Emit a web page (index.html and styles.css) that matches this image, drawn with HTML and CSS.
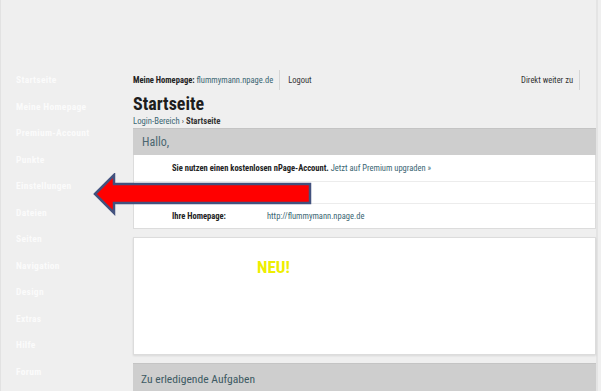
FILE: index.html
```html
<!DOCTYPE html>
<html lang="de">

<head>
    <meta charset="UTF-8">
    <meta name="viewport" content="width=device-width, initial-scale=1.0">
    <title>Startseite - Login-Bereich</title>

    <link rel="stylesheet" href="styles.css">
</head>

<body>

    <div class="page">
        <ul class="sidebar">
            <li>Startseite</li>
            <li>Meine Homepage</li>
            <li>Premium-Account</li>
            <li>Punkte</li>
            <li>Einstellungen</li>
            <li>Dateien</li>
            <li>Seiten</li>
            <li>Navigation</li>
            <li>Design</li>
            <li>Extras</li>
            <li>Hilfe</li>
            <li>Forum</li>
        </ul>

        <div class="main">
            <div class="topbar">
                <span class="topbar-item"><b>Meine Homepage:</b> <a href="#">flummymann.npage.de</a></span>
                <span class="topbar-item sep">Logout</span>
                <span class="topbar-item right">Direkt weiter zu</span>
            </div>

            <h1>Startseite</h1>
            <div class="breadcrumb"><a href="#">Login-Bereich</a> <span class="raquo">›</span> <b>Startseite</b></div>

            <div class="box-head">Hallo,</div>
            <div class="panel">
                <div class="row row-1"><b>Sie nutzen einen kostenlosen nPage-Account.</b>&nbsp;<a href="#">Jetzt auf Premium upgraden »</a></div>
                <div class="row row-2"></div>
                <div class="row row-3"><b class="label">Ihre Homepage:</b><a href="#">http://flummymann.npage.de</a></div>
            </div>

            <div class="panel news">
                <span class="neu">NEU!</span>
            </div>

            <div class="box-head tasks">Zu erledigende Aufgaben</div>
        </div>
    </div>

    <!-- roter Pfeil auf Einstellungen -->
    <svg class="arrow" width="222" height="44" viewBox="0 0 222 44">
        <polygon points="2,21 21,2 21,11 217,11 217,30 21,30 21,40" fill="#ff0000" stroke="#43527e" stroke-width="2.5" stroke-linejoin="miter"/>
    </svg>

</body>
</html>
```

FILE: styles.css
```css
body {
    margin: 0;
    background-color: #efefef;
    font-family: Roboto, "Liberation Sans", Arial, sans-serif;
    font-stretch: 75%;
    color: #222;
    height: 391px;
    overflow: hidden;
    position: relative;
}

a {
    color: #3a6673;
    text-decoration: none;
}

.page {
    display: flex;
    border-left: 1px solid #e2e2e2;
}

.sidebar {
    list-style: none;
    margin: 0;
    padding: 67px 0 0 15px;
    width: 117px;
}

.sidebar li {
    height: 26.5px;
    line-height: 26.5px;
    font-size: 9.5px;
    font-weight: bold;
    letter-spacing: 0.3px;
    color: #fbfbfb;
}

.main {
    width: 463px;
    padding-top: 70px;
    border-right: 2px solid #e4e4e4;
}

.topbar {
    display: flex;
    align-items: center;
    height: 20px;
    font-size: 8.5px;
}

.topbar-item {
    line-height: 20px;
}

.topbar-item.sep {
    border-left: 1px solid #d6d6d6;
    margin-left: 6px;
    padding-left: 8px;
    color: #333;
}

.topbar-item.right {
    margin-left: auto;
    margin-right: 16px;
    padding-right: 6px;
    border-right: 1px solid #d6d6d6;
    color: #333;
}

h1 {
    margin: 3px 0 0;
    font-size: 18px;
    line-height: 22px;
    color: #1d1d1d;
}

.breadcrumb {
    font-size: 8.7px;
    line-height: 12px;
    color: #333;
}

.raquo {
    font-size: 8px;
}

.box-head {
    background-color: #cecece;
    border-top: 1px solid #c4c4c4;
    height: 26px;
    line-height: 26px;
    padding-left: 9px;
    font-size: 12px;
    color: #4a6670;
}

.panel {
    background-color: #fff;
    border: 1px solid #dcdcdc;
    border-top: none;
}

.row {
    display: flex;
    align-items: center;
    padding-left: 38px;
    font-size: 8.5px;
    border-bottom: 1px solid #ececec;
}

.row-1 {
    height: 26px;
}

.row-2 {
    height: 21px;
}

.row-3 {
    height: 24px;
    border-bottom: none;
}

.label {
    width: 95px;
}

.news {
    margin-top: 8px;
    height: 118px;
    border-top: 1px solid #dcdcdc;
    box-shadow: 0 1px 2px rgba(0, 0, 0, 0.1);
    padding-left: 123px;
    box-sizing: border-box;
}

.neu {
    display: block;
    margin-top: 19px;
    font-size: 17px;
    font-weight: bold;
    color: #eeee00;
}

.tasks {
    margin-top: 8px;
    height: 30px;
    line-height: 30px;
    font-size: 11.6px;
    padding-left: 8px;
    color: #3d5a63;
}

.arrow {
    position: absolute;
    left: 93px;
    top: 173px;
}
```
